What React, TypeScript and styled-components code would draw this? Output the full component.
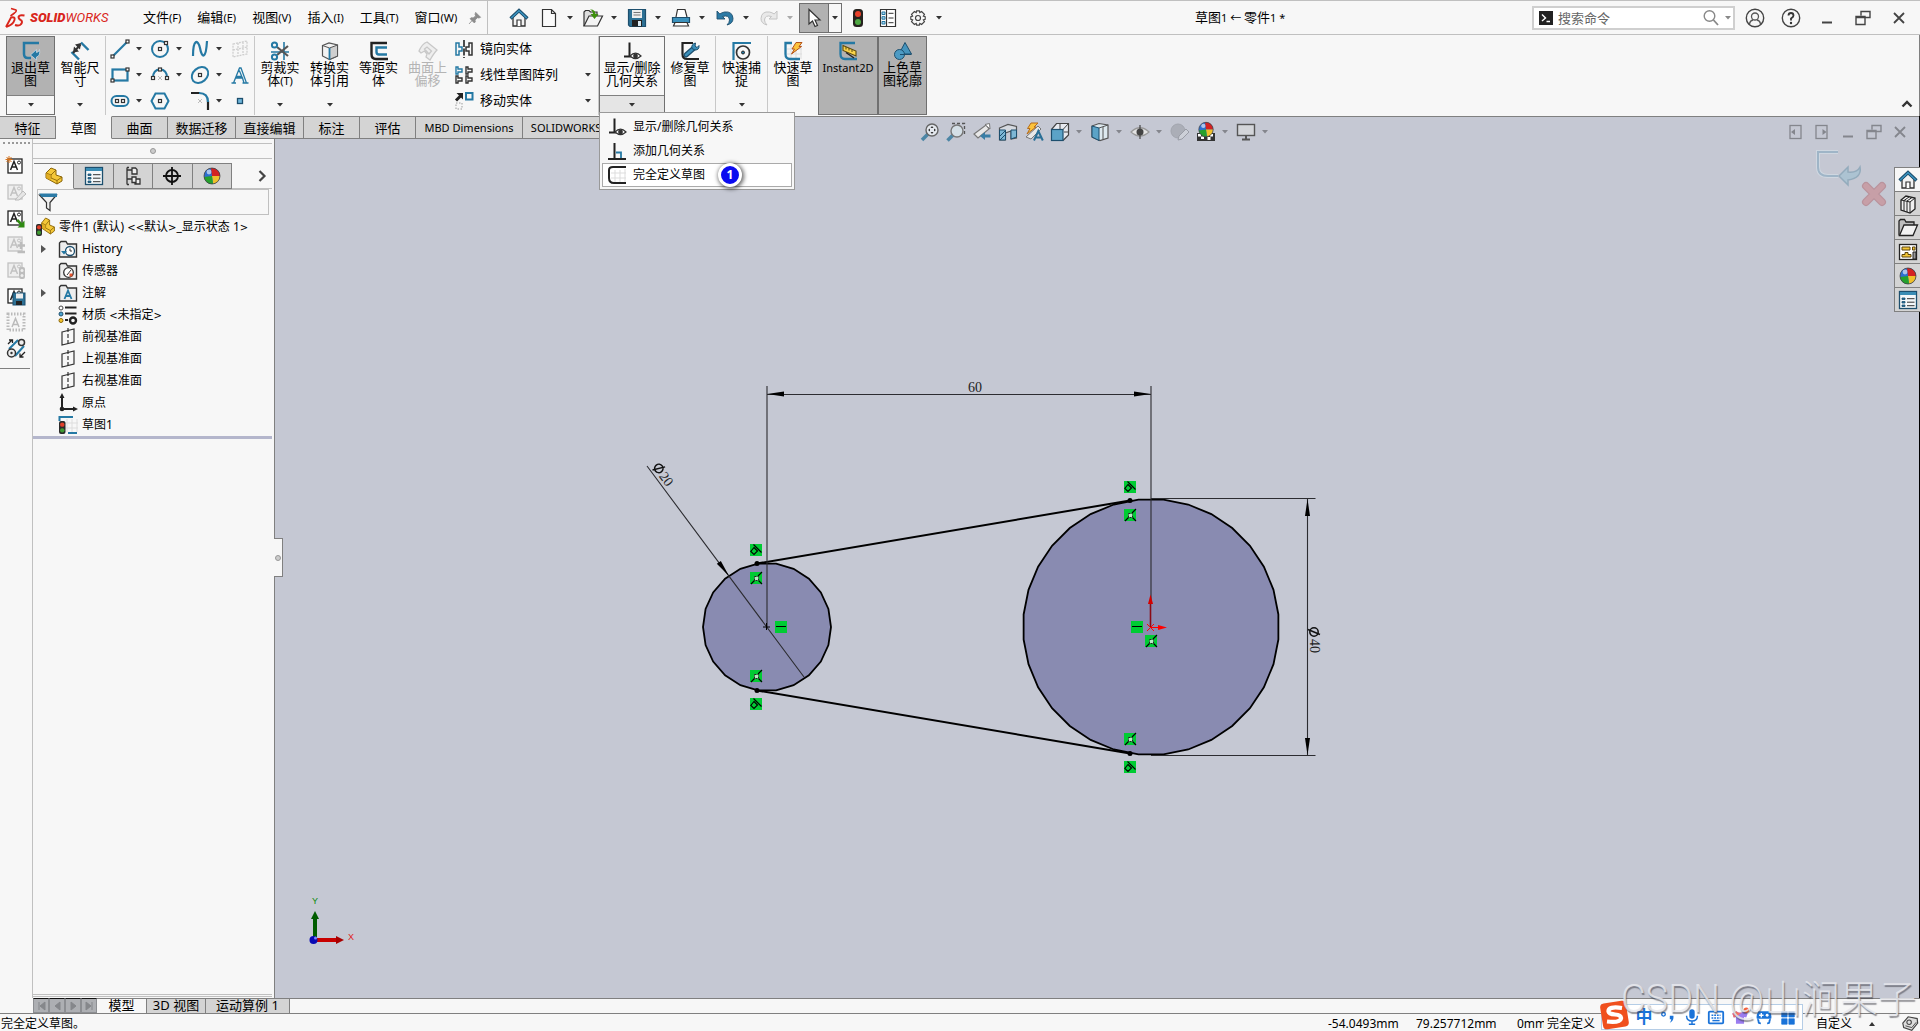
import React from "react";
import styled, { createGlobalStyle, css } from "styled-components";

const C = {
  bg: "#f7f7f7",
  grey: "#d4d4d4",
  pressed: "#b2b2b2",
  line: "#808080",
  soft: "#c0c0c0",
  canvas: "#c5c8d3",
  fill: "#898bb1",
  blue: "#2579a4",
  deep: "#1d4f6e",
  ink: "#333333",
  green: "#00cc33",
};

const Global = createGlobalStyle`
  *, *::before, *::after { box-sizing: border-box; }
  body { margin: 0; background: ${C.bg}; overflow: hidden; }
  body, button, input { font: 12px/16px "Noto Sans", "Noto Sans CJK SC", sans-serif; color: #000; }
  button { border: 0; padding: 0; margin: 0; background: none; border-radius: 0; }
  svg { display: block; flex: none; }
  ul, h1 { margin: 0; padding: 0; list-style: none; font-weight: 400; }
`;

/* ---------- icons ---------- */

const ball = (
  <>
    <circle cx="10" cy="10" r="8" fill="#2d6fd0" />
    <path d="M10 10 L9 2 A8 8 0 0 1 18 10 Z" fill="#d42222" />
    <path d="M10 10 L18 10 A8 8 0 0 1 11 18 Z" fill="#efc02c" />
    <path d="M10 10 L11 18 A8 8 0 0 1 2 11 Z" fill="#25a12c" />
    <circle cx="7" cy="6" r="2.4" fill="#fff" opacity=".6" />
    <circle cx="10" cy="10" r="8" fill="none" stroke="#444" strokeWidth=".8" />
  </>
);
const tagA = (c: string, fill = "#fff") => (
  <>
    <rect x="2" y="3" width="14" height="14" fill={fill} stroke={c} strokeWidth="1.3" />
    <path d="M4.500 14 L8 5.500 L11.500 14 M5.700 11 H10.300" fill="none" stroke={c} strokeWidth="1.500" />
    <circle cx="13" cy="6.500" r="1.500" fill="none" stroke={c} />
  </>
);
const light = (x: number, y: number, h: number) => (
  <>
    <rect x={x} y={y} width={h / 2} height={h} rx="2" fill="#2b2b2b" />
    <circle cx={x + h / 4} cy={y + h * 0.28} r={h * 0.17} fill="#e2402a" />
    <circle cx={x + h / 4} cy={y + h * 0.72} r={h * 0.17} fill="#3f9b32" />
  </>
);
const listBox = (
  <>
    <rect x="1.500" y="1.500" width="17" height="17" fill="#f4f8fa" stroke={C.deep} strokeWidth="1.300" />
    <rect x="2" y="2" width="16" height="3" fill="#3a8db5" />
    <path d="M4 8h3v1.500h-3z M4 11.500h3v1.500h-3z M4 15h3v1.500h-3z" fill={C.blue} stroke={C.deep} strokeWidth=".8" />
    <path d="M9 8.700H16.500 M9 12.200H16.500 M9 15.700H16.500" stroke={C.ink} />
  </>
);
const folder = <path d="M1.500 18 V4 L3 2.500 H8 L9.500 5 H18.500 V18 Z" fill="#ededed" stroke={C.ink} strokeWidth="1.400" />;
const part = (
  <>
    <path d="M2 7 L7 2 L12 4 V9 L18 11 V15 L13 18 L2 12 Z" fill="#f5c838" stroke="#8a6508" strokeWidth="1" />
    <path d="M2 7 L7 9 L12 4 M7 9 V12 L13 14.500 L18 11 M13 14.500 V18" fill="none" stroke="#8a6508" strokeWidth=".9" />
    <path d="M2 7 L7 9 V14.500 L2 12Z" fill="#d9a31c" opacity=".7" />
  </>
);
const sq = (x: number, y: number) => <rect x={x - 1.5} y={y - 1.5} width="3" height="3" fill="#fff" stroke={C.ink} strokeWidth="1.200" />;
const homeIcon = (
  <>
    <path d="M4 9 V18 H16 V9 L10 3.500Z" fill="#f2f2f2" stroke={C.ink} strokeWidth="1.300" />
    <path d="M8 18 V12 H12 V18" fill="#fff" stroke={C.ink} strokeWidth="1.200" />
    <path d="M1.500 10.500 L10 2.500 L18.500 10.500" fill="none" stroke={C.deep} strokeWidth="3.200" />
    <path d="M2.200 10 L10 2.700 L17.800 10" fill="none" stroke="#3a93c0" strokeWidth="1.400" />
  </>
);
const eye = (y: number) => (
  <>
    <path d={`M8 ${y} Q13.500 ${y - 5.5} 19 ${y} Q13.500 ${y + 5} 8 ${y}Z`} fill="#fff" stroke={C.ink} strokeWidth="1.200" />
    <circle cx="13.500" cy={y} r="2.400" fill={C.ink} />
  </>
);

const icons: Record<string, React.ReactNode> = {
  home: homeIcon,
  newdoc: <path d="M3.500 1.500 H12.500 L16.500 5.500 V18.500 H3.500 Z M12.500 1.500 V5.500 H16.500" fill="#fbfbfb" stroke={C.ink} strokeWidth="1.200" />,
  open: (
    <>
      <path d="M1 18 V4 L2.500 2.500 H6 L7.500 4 H14 V8" fill="#ddd" stroke={C.ink} strokeWidth="1.200" />
      <path d="M1 18 L6 8 H19.500 L14.500 18Z" fill="#f4f4f4" stroke={C.ink} strokeWidth="1.200" />
      <path d="M7 1.500 Q12 1 12.500 6 H15.500 L11.500 11 L7.500 6 H10 Q10 3 7 1.500Z" fill="#3d8f0c" />
    </>
  ),
  save: (
    <>
      <path d="M1.500 1.500 H18.500 V18.500 H3 L1.500 17Z" fill="#2d7195" stroke={C.deep} strokeWidth="1.200" />
      <rect x="5" y="2" width="10" height="8" fill="#eee" />
      <path d="M6.500 4.500H13.500 M6.500 7H13.500" stroke="#777" />
      <rect x="5" y="12" width="10" height="6.500" fill="#222" />
      <rect x="11" y="13" width="3" height="5" fill="#dcecf5" />
    </>
  ),
  print: (
    <>
      <path d="M5 9 L6.500 1.500 H14 L16 9" fill="#fff" stroke={C.ink} strokeWidth="1.200" />
      <path d="M1.500 9.500 H18.500 V14.500 H1.500Z" fill="#3c92bd" stroke={C.deep} strokeWidth="1.200" />
      <path d="M4 14.500 H16 L17.500 18 H2.500Z" fill="#fff" stroke={C.ink} strokeWidth="1.200" />
    </>
  ),
  undo: <path d="M2 3 V11 H10 L7.500 8.500 Q14 6.500 14.500 12 Q14.500 14.500 12 17 Q18 15.500 18 10.500 Q17.500 3 9.500 4 Q7 4.500 4.800 6Z" fill="#2c7ba6" stroke={C.deep} strokeWidth=".9" />,
  redo: <path d="M18 3 V11 H10 L12.500 8.500 Q6 6.500 5.500 12 Q5.500 14.500 8 17 Q2 15.500 2 10.500 Q2.500 3 10.500 4 Q13 4.500 15.200 6Z" fill="#e9e9e9" stroke="#c4c4c4" />,
  cursor: <path d="M5 1.500 V16 L8.500 13 L11 18.500 L13.500 17.500 L11 12 H16Z" fill="#fff" stroke={C.ink} strokeWidth="1.200" />,
  traffic: (
    <>
      <rect x="5" y="1" width="10" height="18" rx="3.500" fill="#26221f" />
      <circle cx="10" cy="6" r="3" fill="#e8402a" />
      <circle cx="10" cy="14" r="3" fill="#4ea843" />
    </>
  ),
  options: (
    <>
      <path d="M2.500 1.500 H17.500 V18.500 H2.500 Z M8.500 1.500V18.500" fill="#fff" stroke={C.ink} strokeWidth="1.200" />
      <path d="M4 4h3v2.500h-3z M4 8.700h3v2.500h-3z M4 13.500h3v2.500h-3z" fill="#a9d3ea" stroke={C.blue} />
      <path d="M10.500 5.300H15.500 M10.500 10H15.500 M10.500 14.700H15.500" stroke={C.ink} />
    </>
  ),
  gear: (
    <>
      <path d="M8 4 L8.500 2 H11.500 L12 4 L14 2.800 L17.200 6 L16 8 L18 8.500 V11.500 L16 12 L17.200 14 L14 17.200 L12 16 L11.500 18 H8.500 L8 16 L6 17.200 L2.800 14 L4 12 L2 11.500 V8.500 L4 8 L2.800 6 L6 2.800Z" fill="none" stroke="#444" strokeWidth="1.300" />
      <circle cx="10" cy="10" r="2.800" fill="none" stroke="#444" strokeWidth="1.300" />
    </>
  ),
  pin: <path d="M11 2 L18 9 L15.500 10 L13.500 9.500 L10 13 L10.500 15.500 L9 17 L3 11 L5 9.500 L7.300 10 L11 7 L10 4.500Z M6 13.500 L1.500 18.500" fill="#8c8c8c" stroke="#8c8c8c" strokeWidth="1.200" />,
  exit: (
    <>
      <path d="M18 2 H3 V13 Q3 17 7 17 H10" fill="none" stroke={C.blue} strokeWidth="2.500" />
      <path d="M18.500 8.500 Q18 11 15.500 11.500 V8.500 L9.500 14 L15.500 19 V16 Q19.500 15 18.500 8.500Z" fill={C.blue} stroke="#cfe3ee" strokeWidth=".7" />
    </>
  ),
  smart: (
    <>
      <path d="M1.500 11 L9 18.500 M11 1.500 L18.500 9" stroke={C.blue} strokeWidth="2.400" />
      <path d="M3 12 L10.500 3.500" stroke={C.ink} strokeWidth="2" />
      <path d="M3 11.500 L4 5.500 L9 10.500Z M11 2 L10 8.500 L5 3.500Z" fill={C.ink} />
    </>
  ),
  line: <><path d="M2 18 L18 2" stroke={C.blue} strokeWidth="2.200" />{sq(2.5, 17.5)}{sq(17.5, 2.5)}</>,
  rect: <><rect x="2.500" y="4.500" width="15" height="11" fill="none" stroke={C.blue} strokeWidth="2.200" />{sq(2.5, 15.5)}{sq(17.5, 4.5)}</>,
  slot: <><rect x="1.500" y="5" width="17" height="10" rx="5" fill="none" stroke={C.blue} strokeWidth="2" />{sq(7, 10)}{sq(13, 10)}</>,
  circle: <><circle cx="10" cy="10" r="8" fill="none" stroke={C.blue} strokeWidth="2" />{sq(10, 10)}{sq(16, 4)}</>,
  arc: <><path d="M3 13 Q3 4.500 10 4.500 Q17 4.500 17 13" fill="none" stroke={C.blue} strokeWidth="2" /><path d="M8 11l4 4m0-4l-4 4" stroke="#bbb" />{sq(3, 13)}{sq(17, 13)}{sq(10, 4.5)}</>,
  hex: <><path d="M1.500 10 L5.500 2.500 H14.500 L18.500 10 L14.500 17.500 H5.500Z" fill="none" stroke={C.blue} strokeWidth="2" />{sq(10, 10)}</>,
  spline: <path d="M3 17 C3 0 8 0 10 9 C12 20 16 20 17 2" fill="none" stroke={C.blue} strokeWidth="2.200" />,
  ellipse: <><ellipse cx="10" cy="10" rx="9" ry="7" transform="rotate(-40 10 10)" fill="none" stroke={C.blue} strokeWidth="2" />{sq(10, 10)}</>,
  fillet: <><path d="M1 2 H10 M18 10 V19" stroke="#222" strokeWidth="2.200" /><path d="M9 2 Q18 2 18 11" fill="none" stroke={C.blue} strokeWidth="2.200" /><path d="M8 8l4 4m0-4l-4 4" stroke="#bbb" /></>,
  planeGhost: <path d="M3 5 L17 2 V15 L3 18 Z M3 11 L17 8 M8 4V17 M13 3V16" fill="none" stroke="#cfcfcf" strokeWidth="1.300" strokeDasharray="2 1" />,
  textA: <path d="M1.500 18 H6 M12.500 18 H18.500 M3.500 18 L9.500 3 H11 L16.500 18 H14 L12.500 13 H6 M6.500 11.500 H11.800 L9.300 5.500" fill="none" stroke={C.blue} strokeWidth="1.300" />,
  point: <rect x="7.500" y="7.500" width="5" height="5" fill="#6fb6db" stroke={C.deep} strokeWidth="1.300" />,
  trim: (
    <>
      <path d="M1 11 H19 M14 1 V19" stroke={C.blue} strokeWidth="1.600" />
      <path d="M7 6 L18 15 M7 14 L18 5" stroke="#555" strokeWidth="2.200" />
      <circle cx="4.500" cy="4" r="2.600" fill="none" stroke={C.blue} strokeWidth="2" />
      <circle cx="4.500" cy="16" r="2.600" fill="none" stroke={C.blue} strokeWidth="2" />
    </>
  ),
  convert: (
    <>
      <path d="M2.500 4.500 L9 2 L17.500 4 V15 L9.500 18.500 L2.500 15Z" fill="#f3f3f3" stroke="#555" strokeWidth="1.200" />
      <path d="M9.500 7 L17.500 4 V15 L9.500 18.500Z" fill="#cfcfcf" stroke="#555" />
      <path d="M2.500 4.500 L9.500 7" fill="none" stroke="#555" />
      <path d="M9.500 7 V18.500" fill="none" stroke={C.blue} strokeWidth="1.800" />
    </>
  ),
  offset: <><path d="M18 2 H2.500 V13 Q2.500 18 7 18 H19" fill="none" stroke="#222" strokeWidth="2.400" /><path d="M18 6.500 H7.500 V11 Q7.500 13.500 10 13.500 H18" fill="none" stroke={C.blue} strokeWidth="2.400" /></>,
  surf: <path d="M1 10 Q4 3 9 1 L19 9 Q16 12 12 19 L8 16 L9 13 L6.500 10 L3 12Z M6.500 8 L9 6 L13.500 10 L11 13Z" fill="#eee" stroke="#c8c8c8" strokeWidth="1.300" />,
  mirror: <><path d="M10 1V19" stroke="#222" strokeWidth="1.600" strokeDasharray="7 1.500" /><path d="M2 4 H5 V8 H8 V12 H5 V16 H2Z" fill="none" stroke={C.blue} strokeWidth="1.500" /><path d="M18 4 H15 V8 H12 V12 H15 V16 H18Z" fill="none" stroke="#333" strokeWidth="1.500" /></>,
  pattern: <><path d="M2 2 H4 V4 H8 V7 H4 V9 H2Z" fill="none" stroke={C.blue} strokeWidth="1.400" /><path d="M12 2 H14 V4 H18 V7 H14 V9 H12Z M2 11 H4 V13 H8 V16 H4 V18 H2Z M12 11 H14 V13 H18 V16 H14 V18 H12Z" fill="none" stroke="#333" strokeWidth="1.400" /></>,
  move: <><path d="M2 9.500 L6.500 5" stroke="#222" strokeWidth="3" /><path d="M2.500 2 H9 V8.500Z" fill="#222" /><rect x="12" y="2" width="6.500" height="6.500" fill="none" stroke={C.blue} strokeWidth="2" /><path d="M2 12h6v6h-6z" fill="none" stroke="#bbb" strokeWidth="1.500" strokeDasharray="1.500 1.500" /></>,
  relations: <><path d="M7.500 1.500 V14.500 M2 15.500 H10" stroke="#222" strokeWidth="2" />{eye(15)}</>,
  addrel: <><path d="M7.500 2 V17 M1 18 H19" stroke="#222" strokeWidth="2" /><path d="M9 11.500 H14 V17" fill="none" stroke={C.blue} strokeWidth="1.800" /></>,
  fulldef: <><path d="M8 5V17 M13 5V17 M18 4V18 M4 8H19 M4 13H19" stroke="#ddd" /><path d="M19 2 H6 Q2 2 2 5 V13 Q2 18 7 18 H19" fill="none" stroke="#222" strokeWidth="2" /></>,
  repair: <><path d="M13 2 H2.500 V13 Q2.500 18 7 18 H19" fill="none" stroke="#222" strokeWidth="2.200" /><path d="M6 14 L14 7" stroke={C.deep} strokeWidth="5" strokeLinecap="round" /><path d="M6 14 L14 7" stroke="#3b8fba" strokeWidth="2.500" strokeLinecap="round" /><path d="M12 7.500 Q11 3 15.500 2 L15 5 L17 6.500 L19 4.500 Q19.500 9 15 9Z" fill="#3b8fba" stroke={C.deep} /></>,
  snap: <><path d="M1.500 19 V2 H19" fill="none" stroke={C.blue} strokeWidth="2.200" /><circle cx="11" cy="11.500" r="6.500" fill="none" stroke="#333" strokeWidth="1.700" /><circle cx="11" cy="11.500" r="1.500" fill={C.blue} stroke="#222" /></>,
  rapid: <><path d="M8 4V17 M13 4V17 M18 4V18 M4 8H19 M4 13H19" stroke="#ddd" /><path d="M9 2 H2.500 V13 Q2.500 18 7 18 H17" fill="none" stroke={C.blue} strokeWidth="2.300" /><path d="M13 1.500 H19 L16 5.500 H18.500 L8.500 13 L11.500 8 H9Z" fill="#fcc33c" stroke="#b5541a" /></>,
  instant: <><path d="M17 2 H2.500 V13 Q2.500 18 7 18 H19" fill="none" stroke={C.blue} strokeWidth="2.300" /><path d="M5 4.500 L18 10 V15 L5 9.500Z" fill="#f9d44b" stroke="#5c4b0c" strokeWidth="1.100" /><path d="M8 6V8.500 M11 7V9.500 M14 8.500V11" stroke="#5c4b0c" /><path d="M8 11.500 L16 17" stroke="#222" strokeWidth="1.500" /></>,
  shaded: <><path d="M12 1.500 L18.500 13 H6Z" fill="#4694bd" stroke={C.deep} /><circle cx="6.500" cy="13.500" r="5" fill="#4d9bc4" stroke={C.deep} /><path d="M7 13.500H18.500" stroke={C.deep} /></>,
  zoomfit: <><path d="M2 18 L8 12" stroke="#4d86a5" strokeWidth="3.500" /><circle cx="12" cy="8" r="6" fill="#e4e8ee" stroke="#666" strokeWidth="1.400" /><path d="M12 4l1.500 2h-3z M12 12l1.500-2h-3z M8 8l2-1.500v3z M16 8l-2-1.500v3z" fill="#333" /></>,
  zoomarea: <><path d="M6 1.500 H18.500 V14" fill="none" stroke="#555" strokeDasharray="3 2" strokeWidth="1.300" /><path d="M1.500 18.500 L7 13" stroke="#4d86a5" strokeWidth="3.500" /><circle cx="11" cy="9" r="6" fill="#d4dfe6" stroke="#777" strokeWidth="1.400" /></>,
  prevview: <><path d="M2 12 L14 3 L17 7 L6 16Z" fill="#e8e8e8" stroke="#777" strokeWidth="1.200" /><path d="M13 2.500 L17.500 1.500 L18 7Z" fill="#fff" stroke="#777" /><path d="M8 14 L13 10 V12.500 H18.500 V15.500 H13 V18Z" fill="#3a7ea6" /></>,
  section: <><path d="M1.500 6 L10 2.500 L18.500 4.500 V16 L13 17 V9 L7.500 11 V18 H1.500Z" fill="#d5d9df" stroke="#555" strokeWidth="1.200" /><path d="M1.500 8 H7.500 V18 H1.500Z M13 8 H18.500 V15 L13 17Z" fill="#7db7d5" stroke={C.deep} /><path d="M2 14l5-5 M2 18l5-5" stroke={C.deep} /></>,
  dynview: <><path d="M2 15 L14 4 L17 7 L7 17Z" fill="#e8e8e8" stroke="#777" /><path d="M7 1 H14 L10 5 H12 L3 12 L6 6.500 H3.500Z" fill="#fcc33c" stroke="#b56b1a" /><path d="M10 18.500 L14.300 9 L18.800 18.500 M11.500 15.500 H17" fill="none" stroke="#2a6f96" strokeWidth="2" /></>,
  orient: <><path d="M1.500 7.500 L6.500 1.500 H18.500 V13 L13 18.500" fill="#e7eaf0" stroke="#444" strokeWidth="1.200" /><rect x="1.500" y="7.500" width="11.500" height="11" fill="#5ba3c7" stroke={C.deep} strokeWidth="1.200" /><path d="M13 7.500 L18.500 1.500 M10 2V7 M14 10H18" stroke="#444" /></>,
  display: <><path d="M2 4 L9 1.500 L18 3 V16 L10 18.500 L2 15Z" fill="#dde9ef" stroke="#555" strokeWidth="1.200" /><path d="M2 4 L9 6 V18.500 L2 15Z" fill="#5ba3c7" stroke={C.deep} /><path d="M9 6 L18 3 M13 5V17.500" stroke="#555" /></>,
  hide: <><path d="M1 10 Q10 1.500 19 10 Q10 18 1 10Z" fill="#e3e3e3" stroke="#999" strokeWidth="1.200" /><circle cx="10" cy="10" r="3.500" fill="#444" /><path d="M10 3V17" stroke="#444" strokeWidth="1.200" /></>,
  editapp: <><circle cx="8" cy="9" r="7" fill="#abaeb7" stroke="#a2a5ae" /><path d="M8 18 L9 14 L16 7 L19 10 L12 17Z" fill="#cdd0d8" stroke="#9a9da6" /></>,
  scene: <><path d="M1 11H19V19H1Z" fill="#333" /><path d="M2 12h3v2.500h-3z M5 14.500h3v2.500h-3z M14 12h3v2.500h-3z M11.500 15h3v3h-3z" fill="#fff" /><g transform="translate(1 -1.500) scale(.9)">{ball}</g></>,
  monitor: <><rect x="1.500" y="2.500" width="17" height="11" fill="#d3d5d9" stroke="#555" strokeWidth="1.400" /><path d="M10 14V17 M6 17.500H14" stroke="#555" strokeWidth="2" /></>,
  part,
  list: listBox,
  config: <><path d="M4 1.500 V18.500 M4 4 H9 M4 13 H9 M4 1.500H6 M4 18.500H6" stroke="#333" strokeWidth="1.300" fill="none" /><path d="M9 2 H12.500 L14 3.500 V8 H9Z M9 11 H13 V16.500 H9Z M13 13 H17 V18 H12 V16.500" fill="#eee" stroke="#333" strokeWidth="1.300" /></>,
  target: <><circle cx="10" cy="10" r="6" fill="none" stroke="#111" strokeWidth="1.800" /><path d="M10 1V19 M1 10H19" stroke="#111" strokeWidth="1.800" /></>,
  ball,
  filter: <><path d="M1.500 3 H18.500 L12 10.500 V18.500 L8.500 16 V10.500Z" fill="#f0f0f0" stroke={C.ink} strokeWidth="1.200" /><path d="M1 1.500H19V5H3.500Z" fill="#2c7ba6" /></>,
  root: <><g transform="translate(5 -1) scale(.8 1)">{part}</g>{light(1, 7, 12)}</>,
  history: <>{folder}<circle cx="12" cy="12" r="4.500" fill="#fff" stroke={C.deep} strokeWidth="1.300" /><path d="M12 9.500V12H14" stroke={C.ink} fill="none" /><path d="M3 12H9L6 15.500Z" fill={C.blue} /></>,
  sensor: <>{folder}<circle cx="10.500" cy="11.500" r="4.800" fill="#fff" stroke={C.ink} strokeWidth="1.300" /><path d="M9 14 L13 9" stroke={C.ink} /><path d="M11.500 12.500h3v3h-3z" fill="#e5532d" /></>,
  notes: <>{folder}<path d="M6.500 16 L10 7.500 L13.500 16 M7.500 13 H12.500" fill="none" stroke={C.blue} strokeWidth="1.800" /></>,
  material: <><circle cx="3" cy="3" r="2" fill="#fff" stroke="#444" /><circle cx="3" cy="9" r="2" fill="#4aa2cf" stroke={C.deep} /><circle cx="3" cy="15.500" r="2" fill="#f5c52c" stroke="#8a6508" /><path d="M7 2.500H18.500 M7 8.500H18.500 M7 15H10" stroke="#222" strokeWidth="2" /><circle cx="15" cy="15.500" r="3" fill="none" stroke="#222" strokeWidth="2.400" /></>,
  plane: <><path d="M4 5 L16 2 V15 L4 18 Z" fill="none" stroke={C.ink} strokeWidth="1.200" /><path d="M10 1V19" stroke={C.ink} strokeWidth="1.200" strokeDasharray="4 2" /></>,
  origin: <><path d="M4 4 V16 H16" fill="none" stroke="#222" strokeWidth="2" /><path d="M4 0l2.500 5h-5z M20 16l-5-2.500v5z" fill="#222" /><circle cx="4" cy="16" r="2.300" fill="#222" /></>,
  sketch: <><path d="M9 4V17 M14 4V17 M19 4V17 M6 8H20 M6 13H20" stroke="#ddd" /><path d="M1.500 6 V2 H15 M10 18 H19" fill="none" stroke={C.blue} strokeWidth="2" />{light(1, 6, 13)}</>,
  noteNew: <>{tagA("#222")}<path d="M3 0V7 M-.5 3.500H6.500 M.5 1L5.500 6 M5.500 1L.5 6" stroke="#d9731a" /></>,
  noteEdit: <>{tagA("#c2c2c2", "#eee")}<path d="M9 18 L17 9 L20 12 L13 18Z" fill="#e6e6e6" stroke="#bbb" /></>,
  noteGo: <>{tagA("#222")}<path d="M12 11 L16 15 L18.500 12.500 V19.500 H11.500 L14 17 L10.500 13Z" fill="#2f8a12" /></>,
  noteAdd: <>{tagA("#c2c2c2", "#eee")}<path d="M15 8V15 M11.500 11.500H19 M11.500 18H19" stroke="#bcbcbc" strokeWidth="2.400" /></>,
  noteLight: <>{tagA("#c2c2c2", "#eee")}<rect x="13" y="7" width="6" height="12" rx="2" fill="#bdbdbd" /><circle cx="16" cy="10.500" r="1.500" fill="#eee" /><circle cx="16" cy="15.500" r="1.500" fill="#eee" /></>,
  noteSave: <>{tagA("#222")}<rect x="7" y="7" width="12" height="12" fill="#2d7195" stroke={C.deep} /><rect x="10" y="7.500" width="7" height="5" fill="#eee" /><rect x="10" y="15" width="6" height="4" fill="#222" /></>,
  noteGrid: <><rect x="2" y="2" width="16" height="16" fill="none" stroke="#bbb" strokeWidth="3" strokeDasharray="1.500 1.500" /><path d="M6 15 L9.500 6.500 L13 15 M7 12.500 H12" fill="none" stroke="#bbb" strokeWidth="1.500" /></>,
  belt: <><path d="M3 11 L12 2 M9 18 L18 8" stroke={C.blue} strokeWidth="2" /><circle cx="5.500" cy="15" r="4" fill="#eee" stroke="#333" strokeWidth="1.500" /><circle cx="15.500" cy="4.500" r="3" fill="#eee" stroke="#333" strokeWidth="1.500" /><circle cx="5.500" cy="15" r="1.200" fill="#333" /><path d="M2 6L6 2M3 2H6.500V5 M19 14L14 19M14 15.500V19H17.500" fill="none" stroke="#222" strokeWidth="1.300" /></>,
  library: <><path d="M3 6 L8 2 L17 4 V15 L12 19 L3 16Z" fill="#f0f0f0" stroke="#222" strokeWidth="1.300" /><path d="M6 7V17 M9 7.500V18 M12 8V19 M3 6L12 8L17 4 M6 6.500L11 3 M9 7L14 3.500" stroke="#222" fill="none" /></>,
  folderOpen: <><path d="M1 17.500 V3 L2.500 1.500 H6.500 L8 4 H16 V7" fill="#bdbdbd" stroke="#222" strokeWidth="1.300" /><path d="M1.500 17.500 L6 7 H19.500 L15 17.500Z" fill="#f2f2f2" stroke="#222" strokeWidth="1.300" /></>,
  palette: <><rect x="1.500" y="2.500" width="17" height="15" fill="#fff" stroke="#222" strokeWidth="1.300" /><path d="M4 5h8v3h-8z M14.500 5h2.500v3h-2.500z M4 15v-2.500h3v-2h3v2h3v2.500z" fill="#f5c838" stroke="#5a430a" /><path d="M15 10h3v7h-3z" fill="#999" stroke="#222" /></>,
  user: <><circle cx="10" cy="10" r="8.700" fill="none" stroke="#444" strokeWidth="1.400" /><circle cx="10" cy="8.500" r="3.500" fill="none" stroke="#555" strokeWidth="1.300" /><path d="M4.500 16 Q5 12.500 8 12 M15.500 16 Q15 12.500 12 12" fill="none" stroke="#555" strokeWidth="1.300" /></>,
  help: <><circle cx="10" cy="10" r="8.700" fill="none" stroke="#444" strokeWidth="1.400" /><path d="M7.500 7.500 Q7.500 5 10 5 Q12.500 5 12.500 7.500 Q12.500 9 10 10.500 V12.500" fill="none" stroke="#333" strokeWidth="1.800" /><circle cx="10" cy="15" r="1.200" fill="#333" /></>,
  min: <path d="M5 14.500H15" stroke="currentColor" strokeWidth="2" />,
  restore: <path d="M8 7.500V3.500H17V9.500H12.500 M3 8.500H12V16.500H3Z M3 9.500H12" fill="none" stroke="currentColor" strokeWidth="1.400" />,
  close: <path d="M5 5L15 15 M15 5L5 15" stroke="currentColor" strokeWidth="1.800" />,
  dockL: <><rect x="4" y="3.500" width="11" height="13" fill="none" stroke="currentColor" strokeWidth="1.300" /><path d="M5 10l4-3v6z" fill="currentColor" /></>,
  dockR: <><rect x="4" y="3.500" width="11" height="13" fill="none" stroke="currentColor" strokeWidth="1.300" /><path d="M14.500 10l-4-3v6z" fill="currentColor" /></>,
  up: <path d="M5.500 12.500L10 8L14.500 12.500" fill="none" stroke="#333" strokeWidth="2.400" />,
  right: <path d="M7.500 5L12.500 10L7.500 15" fill="none" stroke="#444" strokeWidth="2.200" />,
  mag: <><circle cx="8.500" cy="8" r="5.300" fill="none" stroke="#888" strokeWidth="1.400" /><path d="M12.500 12L17 17" stroke="#888" strokeWidth="1.800" /></>,
  prompt: <><rect x="3" y="3" width="14" height="14" fill="#222" /><path d="M6 6.500L9.500 10L6 13 M10.500 13.500H14" fill="none" stroke="#fff" strokeWidth="1.400" /></>,
  tag: <><path d="M2 9 L8 2 L18 4 L18.500 9 L12 17 L3 14Z" fill="#ddd" stroke="#444" strokeWidth="1.300" /><circle cx="9" cy="8" r="2.500" fill="none" stroke="#444" strokeWidth="1.200" /><path d="M5 12l7 2 5-6" fill="none" stroke="#444" /></>,
  mic: <><rect x="7" y="1.500" width="6" height="10.500" rx="3" fill="#1a73d9" /><path d="M4 8.500 Q4 14.500 10 14.500 Q16 14.500 16 8.500 M10 14.500V18 M6.500 18H13.500" fill="none" stroke="#1a73d9" strokeWidth="1.600" /></>,
  keyboard: <><rect x="2" y="4" width="16" height="13" rx="1" fill="none" stroke="#1a73d9" strokeWidth="2" /><path d="M5 8H15 M5 11H15" stroke="#1a73d9" strokeWidth="1.700" strokeDasharray="2 1" /><path d="M6 14H14" stroke="#1a73d9" strokeWidth="1.600" /></>,
  shirt: <><path d="M6 3.500 L1.500 6 L3 10.500 L5.500 10 V17.500 H14.500 V10 L17 10.500 L18.500 6 L14 3.500 Q10 7 6 3.500Z" fill="#9a7cf0" /><path d="M6 3.500 L1.500 6 L3 10.500 L5.500 10 L14 3.500 Q10 7 6 3.500Z" fill="#f5706a" /><circle cx="17" cy="2.500" r="3" fill="#f4633a" /></>,
  pad: <><path d="M4 3.500 H16 Q19 7 18 12 H2 Q1 7 4 3.500Z" fill="#1a73d9" /><path d="M2.500 13 Q4 13 4 15.500 Q4 17 6.500 17 M17.500 13 Q16 13 16 15.500 Q16 17 13.500 17" fill="none" stroke="#1a73d9" strokeWidth="2" /><path d="M7 5.500V10.500 M4.500 8H9.500" stroke="#fff" strokeWidth="1.500" /><circle cx="13.500" cy="8" r="1.600" fill="#fff" /></>,
  apps: <path d="M3 4h6v6h-6z M11 4h6v6h-6z M3 12h6v6h-6z M11 12h6v6h-6z" fill="#1a73d9" stroke="#1a73d9" strokeWidth=".8" strokeLinejoin="round" />,
  comma: <><circle cx="5" cy="7" r="2" fill="none" stroke="#1a73d9" strokeWidth="1.500" /><path d="M12 8.500 h4 q.8 6 -4 8 q2 -2.500 1.500 -4 h-1.500z" fill="#1a73d9" /></>,
};

const Icon = ({ name, size = 20 }: { name: string; size?: number }) => (
  <svg width={size} height={size} viewBox="0 0 20 20" overflow="visible" aria-hidden="true">
    {icons[name]}
  </svg>
);
const Caret = ({ color = "#333", up = false }: { color?: string; up?: boolean }) => (
  <svg width="6" height="4" viewBox="0 0 6 4" aria-hidden="true">
    <path d={up ? "M0 4H6L3 0Z" : "M0 0H6L3 3.500Z"} fill={color} />
  </svg>
);

/* ---------- frame ---------- */

const Shell = styled.div`
  position: relative;
  display: flex;
  flex-direction: column;
  height: 100vh;
  background: ${C.bg};
  overflow: hidden;
`;
const center = css`
  display: flex;
  align-items: center;
  justify-content: center;
`;

/* ---------- title bar ---------- */

const TitleBar = styled.header`
  display: flex;
  align-items: center;
  flex: none;
  height: 35px;
  border-top: 1px solid ${C.soft};
  border-bottom: 1px solid ${C.soft};
`;
const Logo = styled.div`
  display: flex;
  align-items: center;
  gap: 4px;
  width: 143px;
  padding-left: 5px;
  color: #d9261c;
  font: italic 400 13px/16px Roboto, sans-serif;
  b { font-weight: 900; }
`;
const Menus = styled.nav`
  display: flex;
  gap: 16px;
`;
const MenuButton = styled.button`
  font-size: 13px;
  line-height: 20px;
  white-space: nowrap;
  small { font-size: 11px; }
`;
const PinButton = styled.button`
  ${center}
  width: 31px;
  height: 33px;
  padding-left: 6px;
  margin-right: 19px;
  border-right: 1px solid ${C.soft};
`;
const Slot = styled.button<{ $w?: number; $mr?: number }>`
  ${center}
  flex: none;
  width: ${(p) => p.$w ?? 24}px;
  height: 28px;
  margin-right: ${(p) => p.$mr ?? 0}px;
  color: #444;
`;
const SelectTool = styled.div`
  display: flex;
  height: 30px;
  margin-right: 4px;
  border: 1px solid #707070;
  & > button:first-child { background: ${C.pressed}; border-right: 1px solid #707070; }
`;
const DocTitle = styled.h1`
  flex: 1;
  text-align: center;
  font-size: 13px;
  line-height: 20px;
  small { font-size: 11px; }
`;
const Search = styled.label`
  display: flex;
  align-items: center;
  width: 203px;
  height: 24px;
  margin-right: 2px;
  padding: 0 2px 0 2px;
  border: 2px solid #cfcfcf;
  background: #fff;
  input {
    flex: 1;
    min-width: 0;
    border: 0;
    outline: 0;
    padding: 0 0 0 2px;
    background: none;
    font-size: 13px;
  }
  input::placeholder { color: #666; opacity: 1; }
  svg + input + svg { margin-right: 4px; }
`;

/* ---------- ribbon ---------- */

const Ribbon = styled.section`
  display: flex;
  flex: none;
  height: 81px;
  padding: 1px 0 1px 6px;
  border-right: 1px solid ${C.line};
`;
const Sep = styled.i`
  flex: none;
  width: 1px;
  height: 79px;
  background: #c8c8c8;
`;
type ToolState = "plain" | "pressed" | "hover" | "disabled";
const ToolBox = styled.div<{ $w: number; $s: ToolState; $split: boolean }>`
  display: flex;
  flex-direction: column;
  flex: none;
  width: ${(p) => p.$w}px;
  height: 79px;
  border: 1px solid transparent;
  ${(p) => (p.$s === "pressed" || p.$s === "hover") && css`border-color: #707070;`}
  ${(p) => p.$s === "pressed" && !p.$split && css`background: ${C.pressed};`}
`;
const ToolMain = styled.button<{ $s: ToolState }>`
  display: flex;
  flex-direction: column;
  align-items: center;
  height: 58px;
  padding-top: 4px;
  font-size: 13px;
  line-height: 13px;
  white-space: pre;
  color: ${(p) => (p.$s === "disabled" ? "#b4b4b4" : "#000")};
  background: ${(p) => (p.$s === "pressed" ? C.pressed : "none")};
  small { font-size: 11px; line-height: 13px; }
`;
const ToolDrop = styled.button<{ $s: ToolState }>`
  ${center}
  flex: 1;
  ${(p) => (p.$s === "pressed" || p.$s === "hover") && css`border-top: 1px solid #808080;`}
  ${(p) => p.$s === "hover" && css`background: #e5e5e5;`}
`;
const SketchGrid = styled.div`
  display: grid;
  grid-template-columns: repeat(3, 40px) 24px;
  grid-auto-rows: 26px;
  width: 148px;
  padding-left: 4px;
`;
const Pair = styled.div`
  display: flex;
  align-items: center;
  gap: 4px;
`;
const Mini = styled.button<{ $w?: number }>`
  ${center}
  width: ${(p) => p.$w ?? 20}px;
  height: 24px;
`;
const RowTools = styled.div`
  display: flex;
  flex-direction: column;
  width: 146px;
  padding: 0 5px 0 2px;
`;
const RowTool = styled.div`
  display: flex;
  align-items: center;
  justify-content: space-between;
  height: 26px;
`;
const RowButton = styled.button`
  display: flex;
  align-items: center;
  gap: 6px;
  font-size: 13px;
  line-height: 16px;
  span { padding-bottom: 2px; }
`;
const Collapse = styled.button`
  align-self: flex-end;
  margin: 0 2px 1px auto;
`;

const RibbonTabs = styled.nav`
  display: flex;
  flex: none;
  height: 23px;
  background: ${C.canvas};
  border-right: 1px solid #000;
  &::after { content: ""; flex: 1; border-top: 1px solid ${C.line}; }
`;
const RibbonTab = styled.button<{ $w: number; $on?: boolean }>`
  flex: none;
  width: ${(p) => p.$w}px;
  font-size: 13px;
  line-height: 20px;
  text-align: center;
  white-space: nowrap;
  border: solid ${C.line};
  border-width: 1px 1px 1px 0;
  background: ${C.grey};
  ${(p) => p.$on && css`background: ${C.bg}; border-top-color: ${C.bg}; border-bottom-color: ${C.bg};`}
  small { font-size: 11px; }
`;

/* ---------- drop-down ---------- */

const Anchor = styled.div`
  position: relative;
`;
const DropMenu = styled.ul`
  position: absolute;
  z-index: 5;
  left: 0;
  top: 76px;
  width: 196px;
  padding: 2px;
  border: 1px solid #999;
  background: ${C.bg};
`;
const DropItem = styled.button<{ $on?: boolean }>`
  display: flex;
  align-items: center;
  gap: 6px;
  width: 100%;
  height: 24px;
  padding-left: 4px;
  border: 1px solid ${(p) => (p.$on ? "#aaa" : "transparent")};
  background: ${(p) => (p.$on ? "#fff" : "none")};
`;
const Badge = styled.span`
  ${center}
  width: 24px;
  height: 24px;
  margin-left: 7px;
  border: 3px solid #fff;
  border-radius: 50%;
  background: #0a0af0;
  color: #fff;
  font-weight: 700;
  line-height: 12px;
  box-shadow: 1px 1px 4px 1px rgba(0, 0, 0, 0.6);
`;

/* ---------- body ---------- */

const Body = styled.main`
  display: flex;
  flex: 1;
  min-height: 0;
`;
const SideBar = styled.aside`
  flex: none;
  width: 32px;
`;
const SideTools = styled.div`
  display: flex;
  flex-direction: column;
  align-items: center;
  gap: 2px;
  width: 30px;
  padding: 3px 0 8px 2px;
  border-bottom: 1px solid ${C.line};
  &::before {
    content: "";
    width: 27px;
    height: 3px;
    margin-bottom: 7px;
    border-top: 2px dotted #999;
  }
`;
const Panel = styled.aside`
  position: relative;
  display: flex;
  flex-direction: column;
  flex: none;
  width: 243px;
  padding-top: 4px;
  border-left: 1px solid ${C.soft};
  border-right: 1px solid ${C.line};
`;
const PanelGrip = styled.div`
  ${center}
  height: 16px;
  margin: 0 2px 4px 0;
  border: solid ${C.soft};
  border-width: 1px 0;
  &::after { content: ""; width: 6px; height: 6px; border: 1px solid #999; border-radius: 50%; background: #ccc; }
`;
const PanelTabs = styled.div`
  display: flex;
  height: 26px;
  margin-right: 2px;
  padding-left: 1px;
`;
const PanelTab = styled.button<{ $on?: boolean }>`
  ${center}
  width: 40px;
  border: 1px solid ${C.line};
  border-left: 0;
  background: ${C.grey};
  ${(p) => p.$on && css`width: 41px; background: ${C.bg}; border-bottom-color: ${C.bg};`}
`;
const PanelMore = styled.button`
  ${center}
  flex: 1;
  padding-left: 20px;
  border-bottom: 1px solid ${C.soft};
`;
const FilterBox = styled.label`
  display: flex;
  align-items: center;
  height: 26px;
  margin: 0 5px 1px 4px;
  border: 1px solid ${C.soft};
  input { flex: 1; min-width: 0; border: 0; outline: 0; background: none; }
`;
const TreeRow = styled.li<{ $root?: boolean }>`
  display: flex;
  align-items: center;
  gap: 4px;
  height: 22px;
  padding-left: ${(p) => (p.$root ? 2 : 0)}px;
  white-space: nowrap;
`;
const Bracket = styled.span`
  font: 10px/12px "DejaVu Sans", sans-serif;
`;
const twistBox = css`
  ${center}
  width: 21px;
  height: 20px;
`;
const Twist = styled.button`${twistBox}`;
const NoTwist = styled.span`${twistBox}`;
const TreeEnd = styled.div`
  height: 3px;
  margin-right: 2px;
  background: #b4b6cc;
`;
const PanelFoot = styled.div`
  height: 3px;
  margin: auto 2px 1px 0;
  border: solid ${C.soft};
  border-width: 1px 0;
`;
const PanelHandle = styled.button`
  ${center}
  position: absolute;
  z-index: 2;
  top: 399px;
  right: -9px;
  width: 9px;
  height: 39px;
  border: 1px solid ${C.line};
  border-left: 0;
  background: ${C.bg};
  &::after { content: ""; width: 6px; height: 6px; border: 1px solid #999; border-radius: 50%; background: #ccc; }
`;
const Viewport = styled.section`
  position: relative;
  flex: 1;
  min-width: 0;
  background: ${C.canvas};
  border-right: 1px solid #000;
  & > svg { width: 100%; height: 100%; }
`;
const Hud = styled.div`
  position: absolute;
  top: -21px;
  left: 0;
  right: 4px;
  display: flex;
  justify-content: center;
`;
const HudWindow = styled.div`
  position: absolute;
  top: -21px;
  right: 6px;
  display: flex;
  button { color: #84868d; }
`;
const TaskPane = styled.div`
  position: absolute;
  top: 28px;
  right: -1px;
  display: flex;
  flex-direction: column;
  border: solid ${C.line};
  border-width: 1px 0 0 1px;
`;
const TaskButton = styled.button<{ $on?: boolean }>`
  ${center}
  width: 25px;
  height: 24px;
  border-bottom: 1px solid ${C.line};
  background: ${(p) => (p.$on ? C.bg : C.grey)};
`;

/* ---------- bottom ---------- */

const SheetTabs = styled.nav`
  display: flex;
  flex: none;
  height: 15px;
  padding-left: 33px;
  &::after { content: ""; flex: 1; border-top: 1px solid ${C.line}; }
`;
const SheetNav = styled.button`
  ${center}
  width: 16px;
  border: 1px solid #8c8e92;
  border-top-color: #111;
  background: #adafb3;
`;
const SheetTab = styled.button<{ $w: number; $on?: boolean }>`
  width: ${(p) => p.$w}px;
  padding-bottom: 2px;
  font-size: 13px;
  line-height: 12px;
  white-space: nowrap;
  border: solid ${C.line};
  border-width: 1px 1px 0 0;
  background: ${(p) => (p.$on ? C.bg : C.grey)};
`;
const Status = styled.footer`
  display: flex;
  flex: none;
  height: 18px;
  padding-left: 1px;
  border-top: 1px solid ${C.line};
  line-height: 20px;
  overflow: hidden;
  white-space: nowrap;
`;
const StatusCell = styled.span<{ $w: number }>`
  width: ${(p) => p.$w}px;
  overflow: hidden;
`;
const StatusRight = styled.div`
  display: flex;
  height: 20px;
  align-items: center;
  margin-left: auto;
`;
const Units = styled.button`
  display: flex;
  align-items: center;
  gap: 17px;
  width: 84px;
  height: 20px;
`;
const Ime = styled.div`
  position: absolute;
  right: 117px;
  bottom: 1px;
  display: flex;
  align-items: center;
  height: 26px;
  padding: 0 2px 0 30px;
  border: 1px solid #b5cde6;
  background: #fff;
  & > svg { position: absolute; left: -3px; top: -6px; }
`;
const ImeButton = styled.button`
  ${center}
  width: 24px;
  height: 24px;
  color: #1a73d9;
  font-size: 17px;
  font-weight: 700;
`;
const Watermark = styled.div`
  position: absolute;
  right: 4px;
  bottom: 8px;
  font: 300 38px/48px Roboto, "Noto Sans CJK SC", sans-serif;
  color: rgba(232, 233, 238, 0.85);
  text-shadow: 1px 2px 1px rgba(60, 60, 70, 0.55);
  pointer-events: none;
  white-space: nowrap;
`;

/* ---------- drawing ---------- */

const poly = (cx: number, cy: number, r: number, n: number, start: number) =>
  Array.from({ length: n }, (_, i) => {
    const a = ((start + (360 / n) * i) * Math.PI) / 180;
    return `${(cx + r * Math.cos(a)).toFixed(2)},${(cy + r * Math.sin(a)).toFixed(2)}`;
  }).join(" ");

const Mark = ({ x, y, kind }: { x: number; y: number; kind: "t" | "c" | "h" }) => (
  <g transform={`translate(${x - 6} ${y - 6})`}>
    <rect width="12" height="12" fill={C.green} />
    {kind === "h" && <path d="M1 5.500H11" stroke="#000" />}
    {kind === "t" && (
      <>
        <path d="M4 3.500L7.500 7L4 10.500L.8 7.500Z M3.500 .5L11.500 8.500" fill="none" stroke="#000" strokeWidth="1.100" />
      </>
    )}
    {kind === "c" && (
      <>
        <path d="M12 0L8 4 M5 8L1 12 M8.500 8.500L12 12" stroke="#000" strokeWidth="1.100" />
        <path d="M4.500 4.500h4v4h-4z" fill="#b9e8c4" stroke="#222" strokeDasharray="2 1" />
      </>
    )}
  </g>
);
const Arrow = ({ x, y, a }: { x: number; y: number; a: number }) => (
  <path d="M0 0L-17 -2.500V2.500Z" transform={`translate(${x} ${y}) rotate(${a})`} />
);
const DimText = styled.text`
  font: 14px "Liberation Serif", serif;
  fill: #222;
`;
const AxisText = styled.text`
  font: 9px "Liberation Sans", sans-serif;
`;

const Drawing = () => (
  <svg viewBox="275 139 1644 859" role="img" aria-label="草图1">
    <polygon points={poly(767, 627, 64, 22, 0)} fill={C.fill} stroke="#000" strokeWidth="1.800" />
    <polygon points={poly(1151, 627, 128, 32, 5.625)} fill={C.fill} stroke="#000" strokeWidth="1.800" />
    <path d="M757 563.500L1130 500.500 M757 690.500L1130 753.500" stroke="#000" strokeWidth="2" />
    <g fill="#000">
      <circle cx="757" cy="563.500" r="2.500" /><circle cx="757" cy="690.500" r="2.500" />
      <circle cx="1130" cy="500.500" r="2.500" /><circle cx="1130" cy="753.500" r="2.500" />
    </g>
    <path d="M767 386V627 M1151 386V600 M767 394.500H1151 M1151 498.500H1315.500 M1151 755.500H1315.500 M1307.500 499V755 M647 466L804 677" fill="none" stroke="#2c2c30" strokeWidth="1.100" />
    <path d="M763 627H770 M766.500 623V630" stroke="#000" />
    <Arrow x={767} y={394} a={180} />
    <Arrow x={1151} y={394} a={0} />
    <Arrow x={1307.5} y={499} a={-90} />
    <Arrow x={1307.5} y={755} a={90} />
    <Arrow x={729} y={576} a={53.3} />
    <DimText x="975" y="392" textAnchor="middle">60</DimText>
    <g transform="translate(651 468) rotate(53.300)">
      <circle cx="5" cy="-6" r="4.200" fill="none" stroke="#111" strokeWidth="1.500" />
      <path d="M2.500 0L7.500 -12" stroke="#111" strokeWidth="1.400" />
      <DimText x="11" y="-1">20</DimText>
    </g>
    <g transform="translate(1309 626) rotate(90)">
      <circle cx="6" cy="-5" r="4.200" fill="none" stroke="#111" strokeWidth="1.500" />
      <path d="M3.500 1L8.500 -11" stroke="#111" strokeWidth="1.400" />
      <DimText x="13" y="-1">40</DimText>
    </g>
    <Mark x={756} y={550} kind="t" />
    <Mark x={756} y={578} kind="c" />
    <Mark x={756} y={676} kind="c" />
    <Mark x={756} y={704} kind="t" />
    <Mark x={781} y={627} kind="h" />
    <Mark x={1130} y={487} kind="t" />
    <Mark x={1130} y={515} kind="c" />
    <Mark x={1130} y={739} kind="c" />
    <Mark x={1130} y={767} kind="t" />
    <Mark x={1137} y={627} kind="h" />
    <Mark x={1151} y={641} kind="c" />
    <path d="M1150.500 627V602" stroke="#8b0a14" strokeWidth="1.600" />
    <path d="M1150.500 594.500L1153 604H1148Z" fill="#d40000" />
    <path d="M1151 627.500H1160 M1147 624L1154 631 M1154 624L1147 631" stroke="#f00" />
    <path d="M1167 627.500L1158 625V630Z" fill="#f00" />
    <path d="M315 938V918" stroke="#005c00" strokeWidth="4" />
    <path d="M315 911L319 919H311Z" fill="#005c00" />
    <path d="M316 940H337" stroke="#c80000" strokeWidth="4" />
    <path d="M344 940L336 936V944Z" fill="#a80000" />
    <circle cx="313.500" cy="940" r="4" fill="#0a0ab4" />
    <circle cx="315.500" cy="938" r="1.500" fill="#7a86ff" />
    <AxisText x="312" y="904" fill="#0a8a0a">Y</AxisText>
    <AxisText x="348" y="940" fill="#e02020">X</AxisText>
    <g opacity=".6">
      <path d="M1838 152H1818V167Q1818 176 1828 176H1838" fill="none" stroke="#d6e2ea" strokeWidth="4" />
      <path d="M1838 152H1818V167Q1818 176 1828 176H1838" fill="none" stroke="#87a9c0" strokeWidth="2" />
      <path d="M1839 176L1848 167V172Q1857 173 1860 167Q1862 178 1848 180V185Z" fill="#9cc0d2" stroke="#7398ad" strokeWidth="1.500" />
    </g>
    <path d="M1866 186L1882 202 M1882 186L1866 202" stroke="#b9939c" strokeWidth="8" strokeLinecap="round" />
    <path d="M1866 186L1882 202 M1882 186L1866 202" stroke="#c79fa7" strokeWidth="5.500" strokeLinecap="round" />
  </svg>
);

/* ---------- composed parts ---------- */

const Tool = ({ icon, label, lines, w = 49, s = "plain", drop = false }: {
  icon: string; label?: string; lines: React.ReactNode; w?: number; s?: ToolState; drop?: boolean;
}) => (
  <ToolBox $w={w} $s={s} $split={drop}>
    <ToolMain $s={s} disabled={s === "disabled"}>
      <Icon name={icon} />
      <span>{lines}</span>
    </ToolMain>
    {drop && <ToolDrop $s={s} aria-label={label ?? "更多"}><Caret /></ToolDrop>}
  </ToolBox>
);

const TreeLabel = ({ text }: { text: string }) => (
  <span>
    {text.split(/([<>]+)/).map((t, i) => (i % 2 ? <Bracket key={i}>{t}</Bracket> : t))}
  </span>
);

const quick: [string, string][] = [["newdoc", "新建"], ["open", "打开"], ["save", "保存"], ["print", "打印"], ["undo", "撤消"], ["redo", "重做"]];
const sketchTools: [string, boolean][] = [
  ["line", true], ["circle", true], ["spline", true], ["planeGhost", false],
  ["rect", true], ["arc", true], ["ellipse", true], ["textA", false],
  ["slot", true], ["hex", false], ["fillet", true], ["point", false],
];
const hud: [string, boolean][] = [
  ["zoomfit", false], ["zoomarea", false], ["prevview", false], ["section", false], ["dynview", false],
  ["orient", true], ["display", true], ["hide", true], ["editapp", false], ["scene", true], ["monitor", true],
];
const tree: [string, string, boolean][] = [
  ["history", "History", true], ["sensor", "传感器", false], ["notes", "注解", true],
  ["material", "材质 <未指定>", false], ["plane", "前视基准面", false], ["plane", "上视基准面", false],
  ["plane", "右视基准面", false], ["origin", "原点", false], ["sketch", "草图1", false],
];
const ribbonTabs: [React.ReactNode, number][] = [
  ["特征", 56], ["草图", 56], ["曲面", 56], ["数据迁移", 68], ["直接编辑", 68], ["标注", 56], ["评估", 56],
  [<small>MBD Dimensions</small>, 107], [<small>SOLIDWORKS 插件</small>, 112],
];

export default function App() {
  return (
    <Shell>
      <Global />
      <TitleBar>
        <Logo>
          <svg width="21" height="22" viewBox="0 0 21 22" aria-hidden="true">
            <path d="M6 1.500 L11 3 Q12 4 9.500 6 L5.500 9" fill="none" stroke="#d9261c" strokeWidth="1.600" />
            <path d="M1 20 L6 10.500 Q10.500 9.500 9.500 13 Q8 18 1 20 M19.500 8.500 Q14 7.500 13.500 10 Q13.500 12 16.500 13.500 Q18 16 15 18 Q13 19 10 18" fill="none" stroke="#d9261c" strokeWidth="1.900" />
          </svg>
          <span><b>SOLID</b>WORKS</span>
        </Logo>
        <Menus>
          {[["文件", "F"], ["编辑", "E"], ["视图", "V"], ["插入", "I"], ["工具", "T"], ["窗口", "W"]].map(([t, k]) => (
            <MenuButton key={k}>{t}<small>({k})</small></MenuButton>
          ))}
        </Menus>
        <PinButton aria-label="固定菜单"><Icon name="pin" size={14} /></PinButton>
        <Slot $mr={6} aria-label="主页"><Icon name="home" /></Slot>
        {quick.map(([n, l], i) => (
          <React.Fragment key={n}>
            <Slot aria-label={l}><Icon name={n} /></Slot>
            <Slot $w={18} $mr={i === 5 ? 0 : 2} aria-label={`${l}选项`}><Caret color={n === "redo" ? "#aaa" : "#333"} /></Slot>
          </React.Fragment>
        ))}
        <SelectTool>
          <Slot $w={29} aria-label="选择"><Icon name="cursor" /></Slot>
          <Slot $w={12} aria-label="选择选项"><Caret /></Slot>
        </SelectTool>
        <Slot $mr={6} aria-label="重建模型"><Icon name="traffic" /></Slot>
        <Slot $mr={6} aria-label="文件属性"><Icon name="options" /></Slot>
        <Slot aria-label="选项"><Icon name="gear" size={18} /></Slot>
        <Slot $w={18} aria-label="选项菜单"><Caret /></Slot>
        <DocTitle>草图<small>1 ← </small>零件<small>1 *</small></DocTitle>
        <Search>
          <Icon name="prompt" />
          <input placeholder="搜索命令" aria-label="搜索命令" />
          <Icon name="mag" />
          <Caret color="#888" />
        </Search>
        <Slot $w={36} aria-label="登录"><Icon name="user" /></Slot>
        <Slot $w={36} aria-label="帮助"><Icon name="help" /></Slot>
        <Slot $w={36} aria-label="最小化"><Icon name="min" /></Slot>
        <Slot $w={36} aria-label="还原"><Icon name="restore" /></Slot>
        <Slot $w={36} $mr={3} aria-label="关闭"><Icon name="close" /></Slot>
      </TitleBar>

      <Ribbon>
        <Tool icon="exit" lines={"退出草\n图"} s="pressed" drop />
        <Tool icon="smart" lines={"智能尺\n寸"} w={50} drop />
        <Sep />
        <SketchGrid>
          {sketchTools.map(([n, d]) => (
            <Pair key={n}>
              <Mini aria-label={n}><Icon name={n} /></Mini>
              {d && <Mini $w={10} aria-label={`${n} 选项`}><Caret /></Mini>}
            </Pair>
          ))}
        </SketchGrid>
        <Sep />
        <Tool icon="trim" w={50} lines={<>{"剪裁实\n体"}<small>(T)</small></>} drop />
        <Tool icon="convert" lines={"转换实\n体引用"} drop />
        <Tool icon="offset" lines={"等距实\n体"} />
        <Tool icon="surf" lines={"曲面上\n偏移"} s="disabled" />
        <RowTools>
          <RowTool><RowButton><Icon name="mirror" /><span>镜向实体</span></RowButton></RowTool>
          <RowTool><RowButton><Icon name="pattern" /><span>线性草图阵列</span></RowButton><Mini $w={10} aria-label="阵列选项"><Caret /></Mini></RowTool>
          <RowTool><RowButton><Icon name="move" /><span>移动实体</span></RowButton><Mini $w={10} aria-label="移动选项"><Caret /></Mini></RowTool>
        </RowTools>
        <Sep />
        <Anchor>
          <Tool icon="relations" lines={"显示/删除\n几何关系"} w={66} s="hover" drop />
          <DropMenu>
            <li><DropItem><Icon name="relations" />显示/删除几何关系</DropItem></li>
            <li><DropItem><Icon name="addrel" />添加几何关系</DropItem></li>
            <li><DropItem $on><Icon name="fulldef" />完全定义草图<Badge>1</Badge></DropItem></li>
          </DropMenu>
        </Anchor>
        <Tool icon="repair" lines={"修复草\n图"} w={50} />
        <Sep />
        <Tool icon="snap" lines={"快速捕\n捉"} w={51} drop />
        <Sep />
        <Tool icon="rapid" lines={"快速草\n图"} w={50} />
        <Tool icon="instant" lines={<small>Instant2D</small>} w={60} s="pressed" />
        <Tool icon="shaded" lines={"上色草\n图轮廓"} s="pressed" />
        <Collapse aria-label="折叠"><Icon name="up" /></Collapse>
      </Ribbon>

      <RibbonTabs>
        {ribbonTabs.map(([t, w], i) => <RibbonTab key={i} $w={w} $on={i === 1}>{t}</RibbonTab>)}
      </RibbonTabs>

      <Body>
        <SideBar>
          <SideTools>
            {["noteNew", "noteEdit", "noteGo", "noteAdd", "noteLight", "noteSave", "noteGrid", "belt"].map((n) => (
              <Mini key={n} aria-label={n}><Icon name={n} /></Mini>
            ))}
          </SideTools>
        </SideBar>
        <Panel>
          <PanelGrip />
          <PanelTabs>
            {["part", "list", "config", "target", "ball"].map((n, i) => (
              <PanelTab key={n} $on={i === 0} aria-label={n}><Icon name={n} /></PanelTab>
            ))}
            <PanelMore aria-label="更多"><Icon name="right" /></PanelMore>
          </PanelTabs>
          <FilterBox><Icon name="filter" /><input aria-label="过滤" /></FilterBox>
          <ul>
            <TreeRow $root><Icon name="root" /><TreeLabel text="零件1 (默认) <<默认>_显示状态 1>" /></TreeRow>
            {tree.map(([n, t, open]) => (
              <TreeRow key={t}>
                {open ? (
                  <Twist aria-label="展开">
                    <svg width="5" height="8" viewBox="0 0 5 8"><path d="M0 0L5 4L0 8Z" fill="#555" /></svg>
                  </Twist>
                ) : <NoTwist />}
                <Icon name={n} />
                <TreeLabel text={t} />
              </TreeRow>
            ))}
          </ul>
          <TreeEnd />
          <PanelFoot />
          <PanelHandle aria-label="折叠面板" />
        </Panel>
        <Viewport>
          <Drawing />
          <Hud>
            {hud.map(([n, d]) => (
              <React.Fragment key={n}>
                <Slot $w={26} aria-label={n}><Icon name={n} /></Slot>
                {d && <Slot $w={12} $mr={2} aria-label={`${n} 选项`}><Caret color="#84868d" /></Slot>}
              </React.Fragment>
            ))}
          </Hud>
          <HudWindow>
            {["dockL", "dockR", "min", "restore", "close"].map((n) => (
              <Slot key={n} $w={26} aria-label={n}><Icon name={n} /></Slot>
            ))}
          </HudWindow>
          <TaskPane>
            {["home", "library", "folderOpen", "palette", "ball", "list"].map((n, i) => (
              <TaskButton key={n} $on={i === 0} aria-label={n}><Icon name={n} /></TaskButton>
            ))}
          </TaskPane>
        </Viewport>
      </Body>

      <SheetTabs>
        {["M3 1V9M9 1L4 5L9 9Z", "M8 1L3 5L8 9Z", "M3 1L8 5L3 9Z", "M8 1V9M2 1L7 5L2 9Z"].map((d) => (
          <SheetNav key={d} aria-label="翻页"><svg width="11" height="10" viewBox="0 0 11 10"><path d={d} fill="#85878b" stroke="#85878b" /></svg></SheetNav>
        ))}
        <SheetTab $w={50} $on>模型</SheetTab>
        <SheetTab $w={59}>3D 视图</SheetTab>
        <SheetTab $w={84}>运动算例 1</SheetTab>
      </SheetTabs>
      <Status>
        <span>完全定义草图。</span>
        <StatusRight>
          <StatusCell $w={88}>-54.0493mm</StatusCell>
          <StatusCell $w={101}>79.257712mm</StatusCell>
          <StatusCell $w={27}>0mm</StatusCell>
          <StatusCell $w={272}>&nbsp;完全定义</StatusCell>
          <Units>自定义<Caret up /></Units>
          <Slot $w={20} aria-label="标签"><Icon name="tag" size={18} /></Slot>
        </StatusRight>
      </Status>

      <Ime>
        <svg width="31" height="32" viewBox="0 0 31 32" aria-hidden="true">
          <rect x="2.500" y="3" width="26" height="26" rx="4" fill="#f0501e" transform="rotate(-9 15.500 16)" />
          <path d="M23 9 Q9 7 9.500 12.500 Q10 15 16 15.500 Q22.500 16 22 19.500 Q21 24 8 22.500" fill="none" stroke="#fff" strokeWidth="4.200" />
        </svg>
        <ImeButton>中</ImeButton>
        {["comma", "mic", "keyboard", "shirt", "pad", "apps"].map((n) => (
          <ImeButton key={n} aria-label={n}><Icon name={n} size={18} /></ImeButton>
        ))}
      </Ime>
      <Watermark>CSDN @山涧果子</Watermark>
    </Shell>
  );
}
